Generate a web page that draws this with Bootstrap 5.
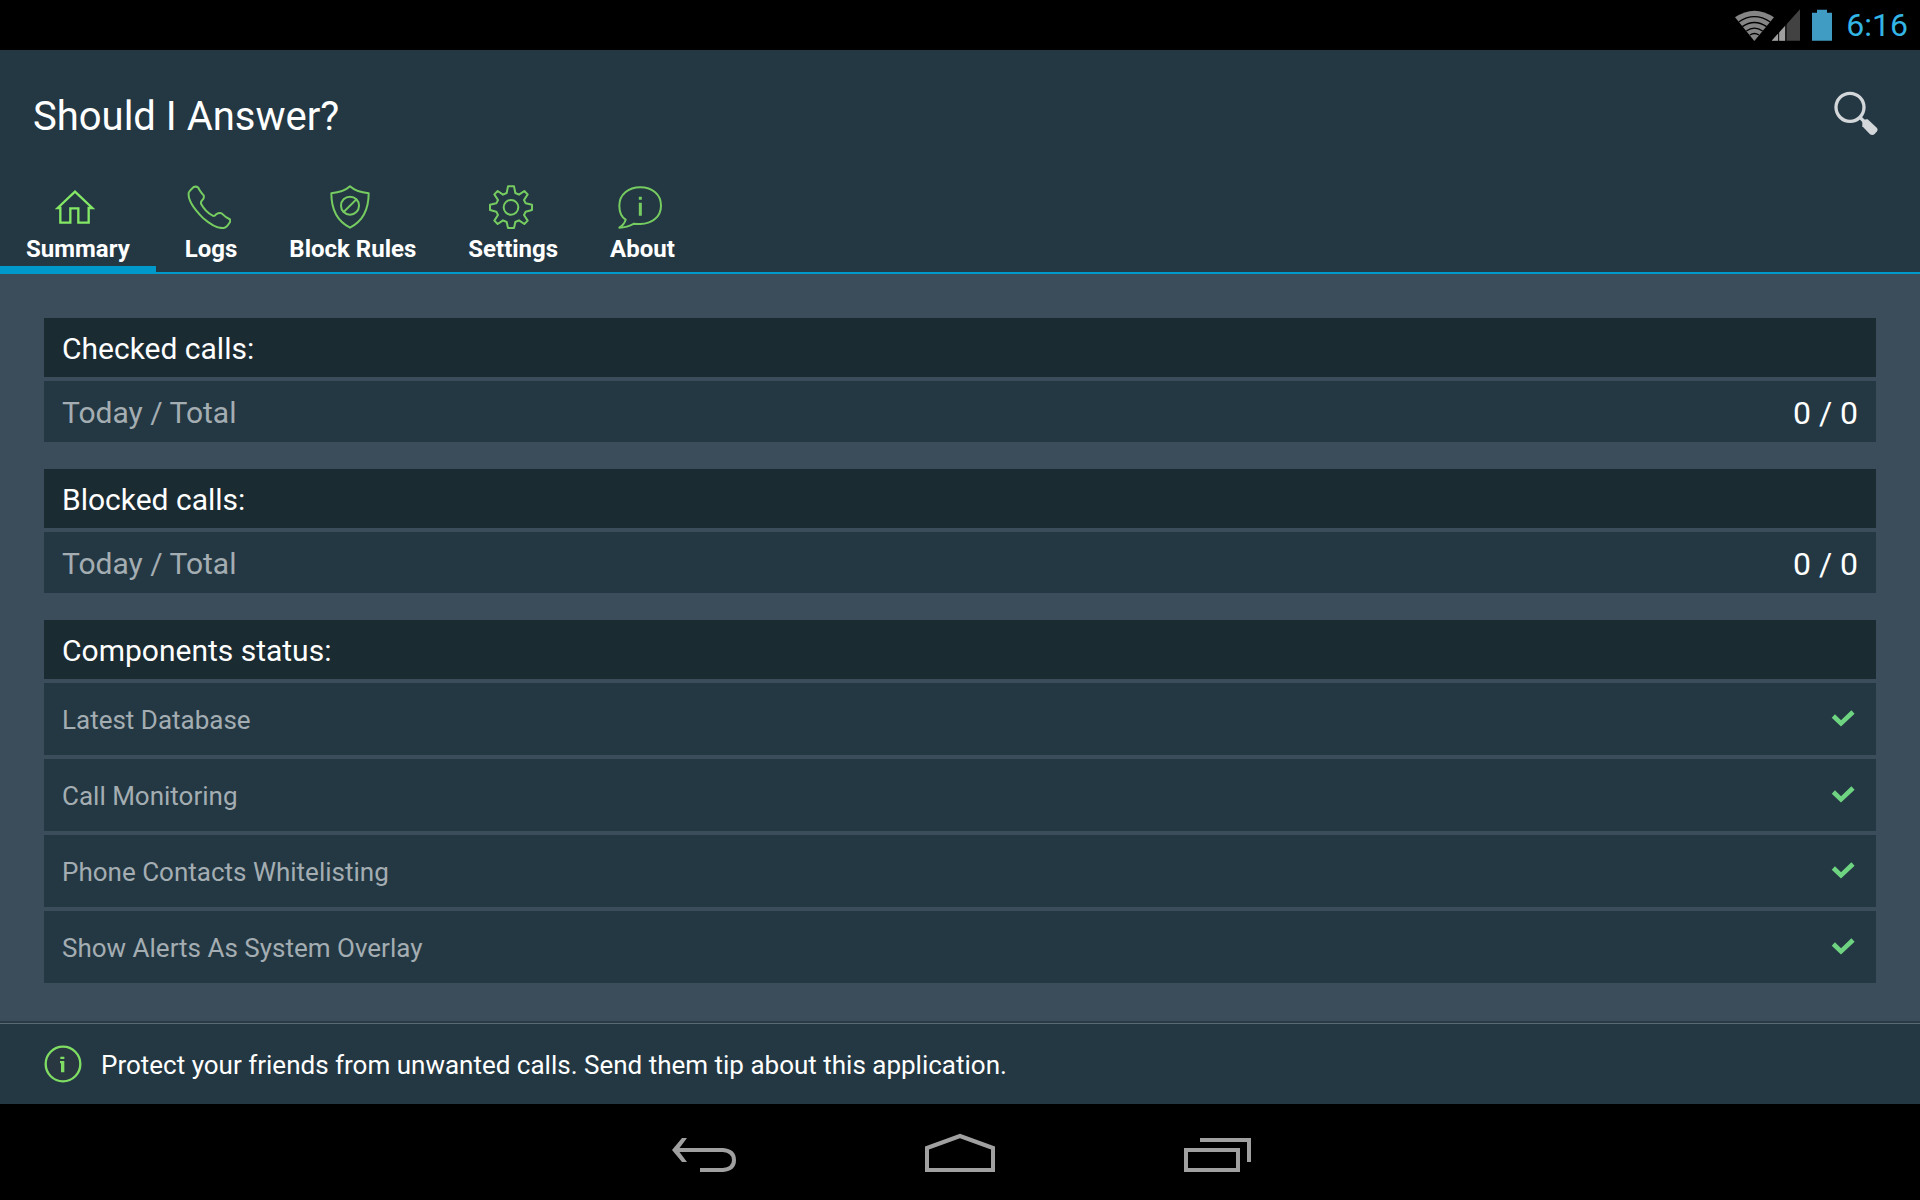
<!DOCTYPE html>
<html lang="en">
<head>
<meta charset="utf-8">
<meta name="viewport" content="width=device-width, initial-scale=1">
<title>Should I Answer?</title>
<link href="https://cdn.jsdelivr.net/npm/bootstrap@5.3.0/dist/css/bootstrap.min.css" rel="stylesheet">
<style>
  body { font-family: Roboto, "Noto Sans", sans-serif; background: #3b4d5b; color: #fff; }
  svg { display: block; flex: none; }
  .sys-bar { height: 50px; background: #000; padding-right: 12px; gap: 11px; }
  .sys-clock { font-size: 32px; line-height: 38px; color: #33b5e5; }
  .app-head { background: #233843; border-bottom: 2px solid #0099cc; }
  .title-bar { height: 128px; padding: 0 41px 0 33px; }
  .app-title { padding-top: 6px; font-size: 40px; line-height: 48px; font-weight: 400; }
  .tab-strip { margin-bottom: -2px; }
  .tab-link { padding: 7px 26px 3px; border-bottom: 8px solid transparent; color: #fff; font-size: 24px; line-height: 28px; font-weight: 700; text-decoration: none; }
  .tab-link.active { border-color: #0099cc; margin-right: 3px; }
  .tab-link svg { margin: 0 5px 6px 0; }
  .line-icon { fill: none; stroke: #76cc60; stroke-width: 6; stroke-linejoin: round; stroke-linecap: round; }
  .content { padding: 44px 44px 38px; gap: 27px; }
  .panel { gap: 4px; }
  .panel-title { background: #1b2b32; padding: 12px 18px 9px; font-size: 30px; line-height: 38px; font-weight: 400; }
  .panel-row { background: #233843; padding: 13px 18px 10px; font-size: 32px; line-height: 38px; }
  .panel-label { color: #a4adb2; font-size: 30px; }
  .status-row { padding: 18px 21px 19px 18px; line-height: 32px; }
  .status-row .panel-label { padding-top: 3px; font-size: 26px; }
  .tip-bar { background: #233843; border: 0; border-top: 2px solid #2b3b45; box-shadow: inset 0 1px #586b74; padding: 21px 44px; gap: 19px; font-size: 26px; line-height: 36px; color: #fff; text-align: left; }
  .tip-bar span { padding-top: 3px; }
  .nav-keys { background: #000; height: 96px; }
  .key-btn { width: 256px; background: none; border: 0; }
</style>
<script src="https://cdn.jsdelivr.net/npm/bootstrap@5.3.0/dist/js/bootstrap.bundle.min.js"></script>
</head>
<body class="d-flex flex-column min-vh-100">
  <div class="sys-bar d-flex align-items-center justify-content-end">
    <svg width="100" height="34" viewBox="45 22 300 102" aria-hidden="true">
      <path fill="#858585" d="M45 50Q103 10 162 50L103 121Z"/>
      <g fill="none" stroke="#000" stroke-width="4"><path d="M56 64Q103 32 151 64M67 78Q103 53 140 78M79 91Q103 74 128 91M90 103Q103 94 117 103"/></g>
      <path fill="#424242" d="M240 26V120H155Z"/>
      <path fill="#a0a0a0" d="M155 120L195 76V120Z"/>
      <path stroke="#000" stroke-width="3" d="M176 90V121M198 70V121"/>
      <path fill="#419cc3" d="M276 36H291V27H321V36H336V120H276Z"/>
    </svg>
    <time class="sys-clock">6:16</time>
  </div>

  <header class="app-head">
    <div class="title-bar d-flex align-items-center justify-content-between">
      <h1 class="app-title m-0">Should I Answer?</h1>
      <button type="button" class="btn p-0 border-0" aria-label="Search">
        <svg width="46" height="46" viewBox="338 273 138 138" aria-hidden="true">
          <circle cx="389" cy="322" r="42" fill="none" stroke="#d3d7da" stroke-width="10"/>
          <path stroke="#d3d7da" stroke-width="10" d="M418 351L434 367"/>
          <path fill="#d3d7da" d="M426 364Q432 356 442 358L470 384Q474 389 470 394L463 402Q457 407 449 403L426 379Z"/>
        </svg>
      </button>
    </div>
    <nav class="tab-strip d-flex" aria-label="Sections">
      <a href="#summary" class="tab-link active d-flex flex-column align-items-center" aria-current="page">
        <svg class="line-icon" width="44" height="44" viewBox="162 45 132 132" aria-hidden="true"><path stroke-width="7" style="stroke:#84e766" stroke-linejoin="miter" d="M176 114L228 65L280 114H269V158H238V115H214V158H184V114Z"/></svg>
        Summary</a>
      <a href="#logs" class="tab-link d-flex flex-column align-items-center">
        <svg class="line-icon" width="44" height="44" viewBox="555 45 132 132" aria-hidden="true"><path d="M560 69Q560 65 575 51Q583 48 589 53Q592 62 605 76Q607 83 603 88Q596 94 597 101Q610 125 632 137Q637 140 642 133Q652 127 659 130Q672 143 682 147Q686 149 684 156Q674 173 665 174Q641 177 602 143C572 113 558 87 560 69Z"/></svg>
        Logs</a>
      <a href="#rules" class="tab-link d-flex flex-column align-items-center">
        <svg class="line-icon" width="44" height="44" viewBox="26 45 132 132" aria-hidden="true"><path d="M92 49Q110 66 148 70C148 120 130 154 92 173C54 154 36 120 36 70Q74 66 92 49Z"/><circle cx="92" cy="107" r="27"/><path d="M73 126L111 88"/></svg>
        Block Rules</a>
      <a href="#settings" class="tab-link d-flex flex-column align-items-center">
        <svg class="line-icon" width="44" height="44" viewBox="505 45 132 132" aria-hidden="true"><path d="M562 49H580L584 69L595 74L611 63L621 73L610 90L615 100L634 104V120L615 125L610 135L621 152L611 162L595 151L584 156L580 174H562L558 156L547 151L531 162L521 152L532 135L527 125L508 120V104L527 100L532 90L521 73L531 63L547 74L558 69Z"/><circle cx="571" cy="112" r="22"/></svg>
        Settings</a>
      <a href="#about" class="tab-link d-flex flex-column align-items-center">
        <svg class="line-icon" width="44" height="44" viewBox="892 45 132 132" aria-hidden="true"><path d="M896 173Q911 163 915 149C900 139 896 124 896 107C896 73 923 52 959 52C995 52 1021 73 1021 107C1021 141 993 162 959 162Q949 162 940 161Q919 173 896 173Z"/><path stroke-width="9" stroke-linecap="butt" d="M959 98V137M959 80V89"/></svg>
        About</a>
    </nav>
  </header>

  <main class="content d-flex flex-column flex-grow-1">
    <section class="panel d-flex flex-column">
      <h2 class="panel-title m-0">Checked calls:</h2>
      <div class="panel-row d-flex justify-content-between"><span class="panel-label">Today / Total</span><span>0 / 0</span></div>
    </section>
    <section class="panel d-flex flex-column">
      <h2 class="panel-title m-0">Blocked calls:</h2>
      <div class="panel-row d-flex justify-content-between"><span class="panel-label">Today / Total</span><span>0 / 0</span></div>
    </section>
    <section class="panel d-flex flex-column">
      <h2 class="panel-title m-0">Components status:</h2>
      <div class="panel-row status-row d-flex justify-content-between align-items-center"><span class="panel-label">Latest Database</span><svg width="24" height="20" viewBox="334 86 72 60" role="img" aria-label="OK"><path fill="none" stroke="#6fd481" stroke-width="14" d="M341 107L364 129L400 95"/></svg></div>
      <div class="panel-row status-row d-flex justify-content-between align-items-center"><span class="panel-label">Call Monitoring</span><svg width="24" height="20" viewBox="334 86 72 60" role="img" aria-label="OK"><path fill="none" stroke="#6fd481" stroke-width="14" d="M341 107L364 129L400 95"/></svg></div>
      <div class="panel-row status-row d-flex justify-content-between align-items-center"><span class="panel-label">Phone Contacts Whitelisting</span><svg width="24" height="20" viewBox="334 86 72 60" role="img" aria-label="OK"><path fill="none" stroke="#6fd481" stroke-width="14" d="M341 107L364 129L400 95"/></svg></div>
      <div class="panel-row status-row d-flex justify-content-between align-items-center"><span class="panel-label">Show Alerts As System Overlay</span><svg width="24" height="20" viewBox="334 86 72 60" role="img" aria-label="OK"><path fill="none" stroke="#6fd481" stroke-width="14" d="M341 107L364 129L400 95"/></svg></div>
    </section>
  </main>

  <button type="button" class="tip-bar d-flex align-items-center">
    <svg width="38" height="38" viewBox="131 133 114 114" aria-hidden="true"><circle cx="188" cy="190" r="52" fill="#293740" stroke="#7fdd63" stroke-width="7"/><path fill="#7fdd63" d="M180 168H192V175H180ZM179 181H192V215H182V188H179Z"/></svg>
    <span>Protect your friends from unwanted calls. Send them tip about this application.</span>
  </button>

  <nav class="nav-keys d-flex justify-content-center" aria-label="System">
    <button type="button" class="key-btn d-flex align-items-center justify-content-center" aria-label="Back">
      <svg width="72" height="60" viewBox="0 0 72 60" fill="none" stroke="#a0a0a0" stroke-width="4" aria-hidden="true"><path d="M7 28H55Q66 29 66 38Q66 47 55 48H32"/><path stroke="none" fill="#a0a0a0" d="M4 28L14 16H19L10 28L19 40H14Z"/></svg>
    </button>
    <button type="button" class="key-btn d-flex align-items-center justify-content-center" aria-label="Home">
      <svg width="72" height="60" viewBox="0 0 72 60" fill="none" stroke="#a0a0a0" stroke-width="4" aria-hidden="true"><path d="M3 26L36 14L69 26V48H3Z"/></svg>
    </button>
    <button type="button" class="key-btn d-flex align-items-center justify-content-center" aria-label="Recent apps">
      <svg width="72" height="60" viewBox="0 0 72 60" fill="none" stroke="#a0a0a0" stroke-width="4" aria-hidden="true"><path d="M6 28H58V48H6ZM20 18H69V40"/></svg>
    </button>
  </nav>
</body>
</html>
